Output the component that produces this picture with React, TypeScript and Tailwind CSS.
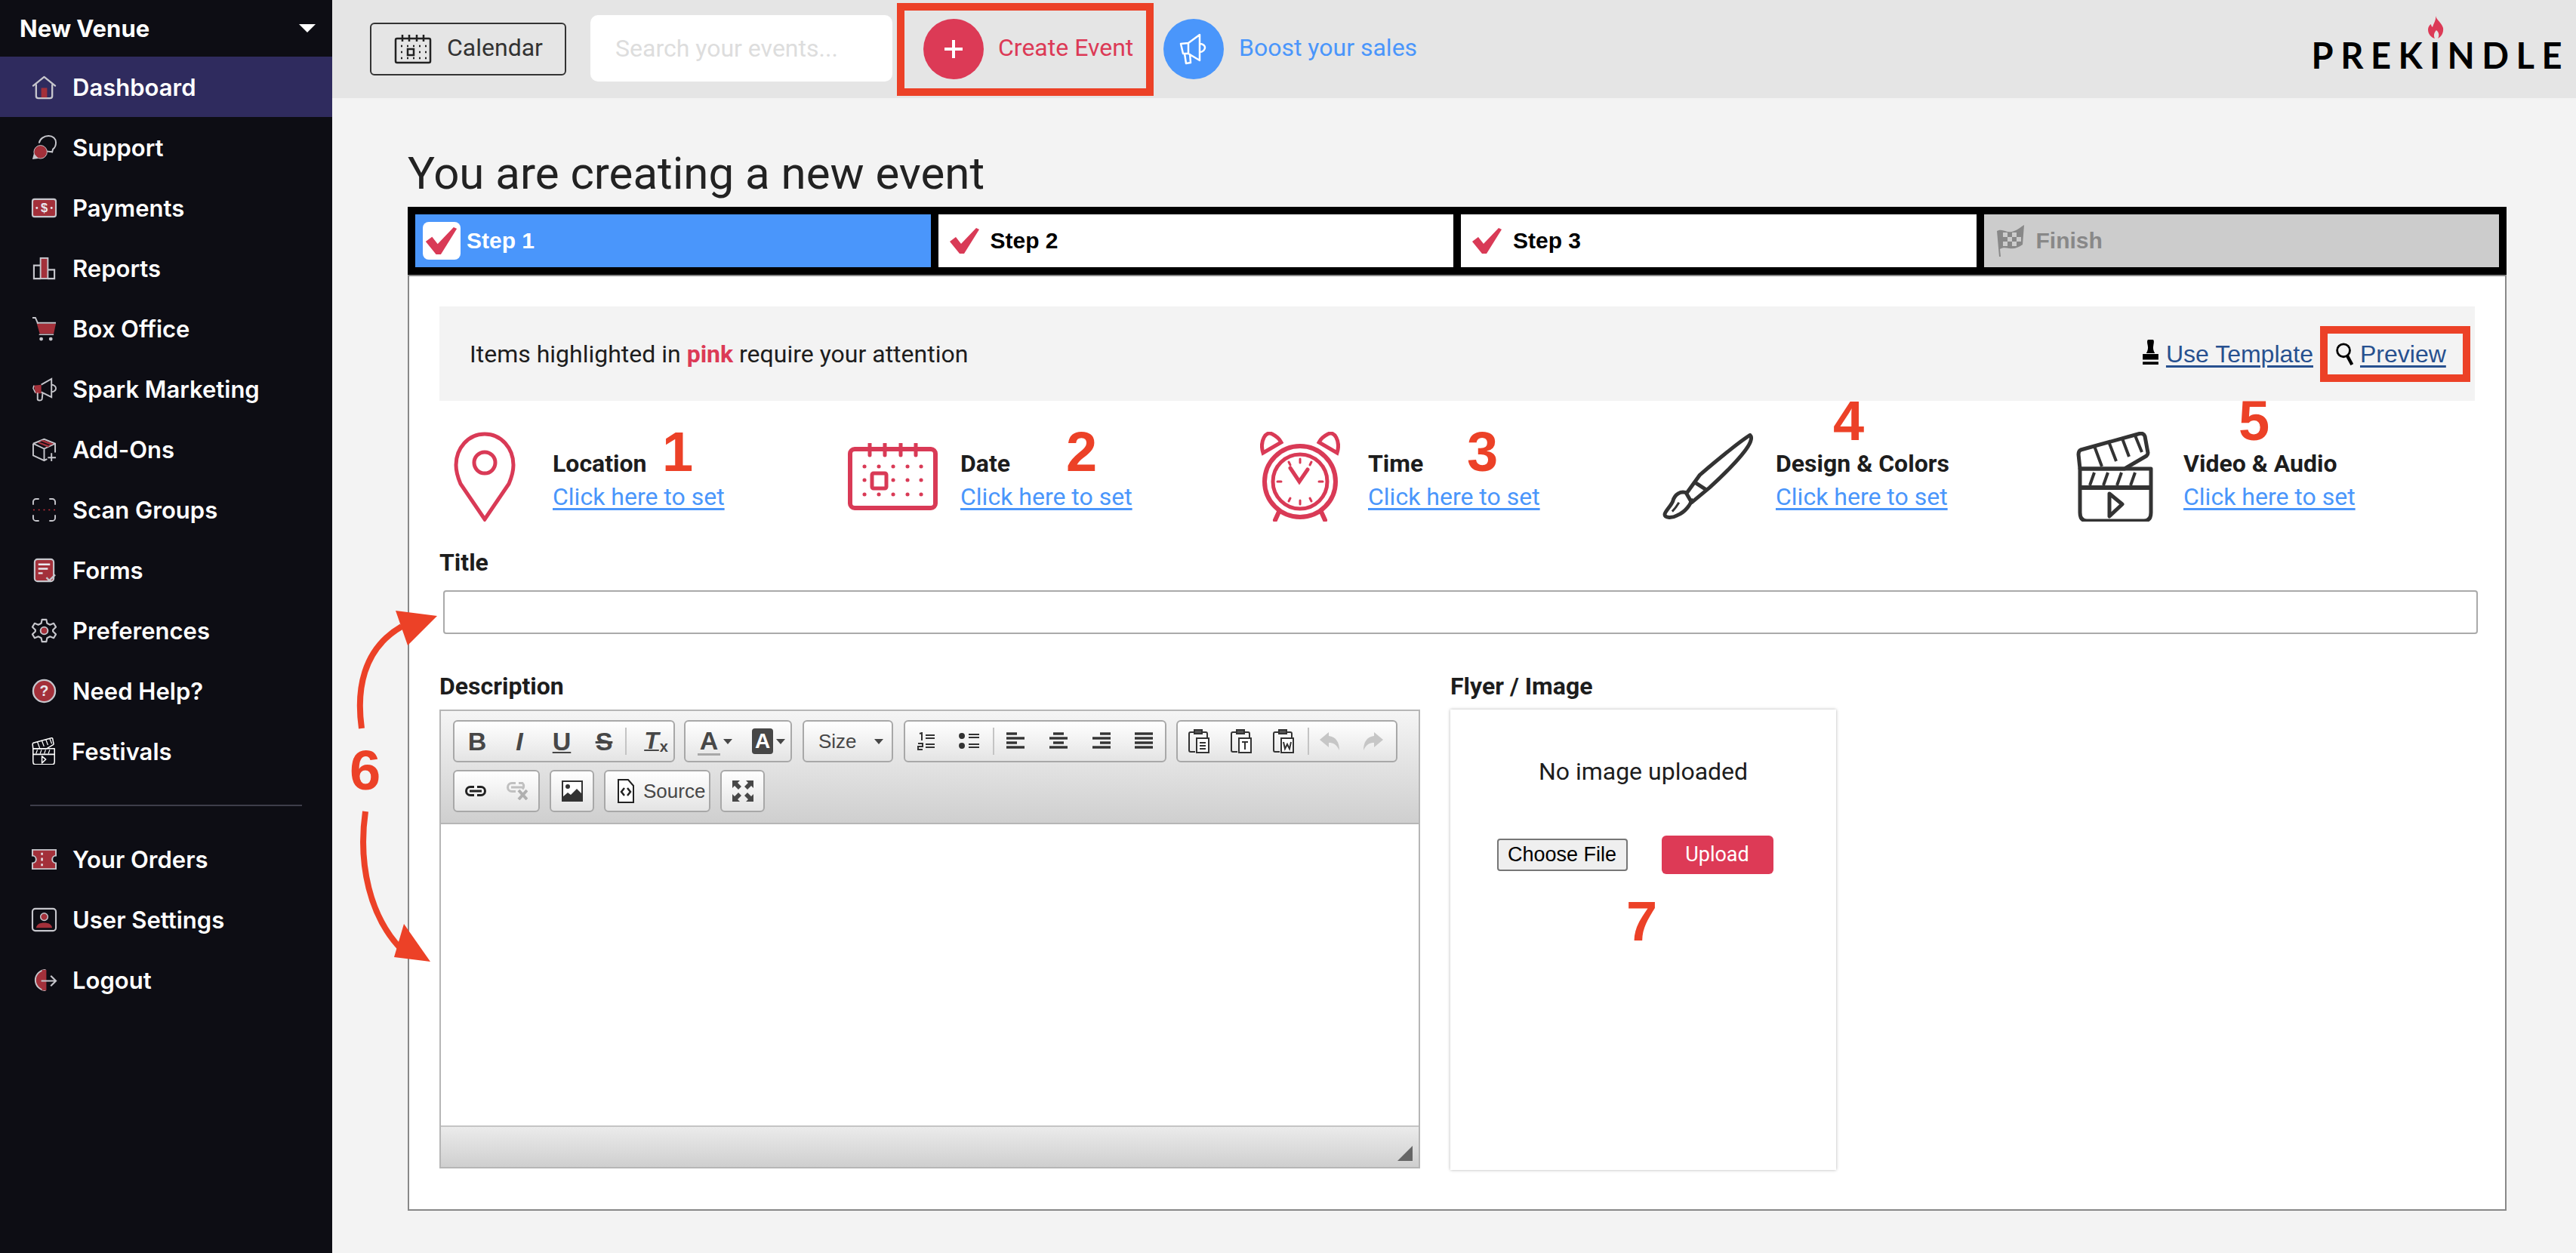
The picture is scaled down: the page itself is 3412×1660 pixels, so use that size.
import React from "react";

const G = "#c6c6cc";
const R = "#a3303a";

const side: Record<string, React.ReactNode> = {
  Dashboard: (<><path d="M2 15 17 3l15 12" fill="none" stroke={G} strokeWidth="2.400" strokeLinecap="round" strokeLinejoin="round"/><path d="M6 13v16a3 3 0 0 0 3 3h16a3 3 0 0 0 3-3V13" fill="none" stroke={G} strokeWidth="2.400"/><rect x="13" y="18" width="8" height="13" fill={R}/></>),
  Support: (<><path d="M10 11C11 5 17 1 23 1c6 0 10 4 10 9 0 4-1 7-4 9l-1 4-8-1" fill="none" stroke={G} strokeWidth="2"/><circle cx="12" cy="23" r="9" fill={R} stroke={G} strokeWidth="1"/><path d="M1 33l2-8 6 7z" fill={G}/></>),
  Payments: (<><rect x="1" y="5" width="32" height="24" rx="3" fill={R} stroke={G} strokeWidth="2.200"/><text x="17" y="23" textAnchor="middle" fontSize="17" fontWeight="700" fill="#e8e8ee" fontFamily="Liberation Sans, sans-serif">$</text><circle cx="7" cy="17" r="1.500" fill="#e8e8ee"/><circle cx="27" cy="17" r="1.500" fill="#e8e8ee"/></>),
  Reports: (<><rect x="12" y="3" width="10" height="28" fill={R} stroke={G} strokeWidth="2"/><path d="M12 13H3v18h9M22 19h9v12h-9" fill="none" stroke={G} strokeWidth="2.200"/></>),
  "Box Office": (<><path d="M1 2h4l4 9" fill="none" stroke={G} strokeWidth="2"/><path d="M7 10h26l-3 14H11z" fill={R}/><path d="M7 9h26" stroke={G} strokeWidth="2"/><path d="M10 25h20" stroke={G} strokeWidth="1.500"/><circle cx="13" cy="31" r="2.500" fill={G}/><circle cx="26" cy="31" r="2.500" fill={G}/></>),
  "Spark Marketing": (<><path d="M3 12l10-1v12H5z" fill={R}/><path d="M13 11 27 3v25l-14-7" fill="none" stroke={G} strokeWidth="2"/><path d="M27 11c4 0 6 3 6 5s-2 5-6 5" fill="none" stroke={G} strokeWidth="2"/><path d="M8 22v9c0 2 5 2 6 0l1-9" fill="none" stroke={G} strokeWidth="2"/><path d="M3 12l-1 4 3 6" fill="none" stroke={G} strokeWidth="1.500"/></>),
  "Add-Ons": (<><path d="M2 9 17 3l15 6v12M2 9v16l15 7 4-2M2 9l15 7 15-7M17 16v16" fill="none" stroke={G} strokeWidth="2"/><path d="M11 5l15 6 4-2-14-5zM8 8l14 6 3-2-14-5z" fill={R}/><path d="M27 22v11M22 28h11" stroke={G} strokeWidth="2"/></>),
  "Scan Groups": (<><path d="M2 10V6a4 4 0 0 1 4-4h4M24 2h4a4 4 0 0 1 4 4v4M2 24v4a4 4 0 0 0 4 4h4M24 32h4a4 4 0 0 0 4-4v-4" fill="none" stroke={G} strokeWidth="2"/><path d="M2 17h30" stroke="#c8303a" strokeWidth="1.500" strokeDasharray="2 5"/></>),
  Forms: (<><rect x="4" y="2" width="26" height="30" rx="4" fill={R} stroke={G} strokeWidth="2.200"/><path d="M9 9h16M9 15h13M9 21h6" stroke="#e8e8ee" strokeWidth="2.500"/><path d="M20 27l4 4 8-8" fill="none" stroke={G} strokeWidth="2.500"/></>),
  Preferences: (<><path d="M14 2h6l1 5 4 2 5-2 3 5-4 4v2l4 4-3 5-5-2-4 2-1 5h-6l-1-5-4-2-5 2-3-5 4-4v-2l-4-4 3-5 5 2 4-2z" fill="none" stroke={G} strokeWidth="2.200" strokeLinejoin="round"/><circle cx="17" cy="17" r="5" fill={R} stroke={G} strokeWidth="2"/></>),
  "Need Help?": (<><circle cx="17" cy="17" r="15" fill={R} stroke={G} strokeWidth="2.400"/><text x="17" y="24" textAnchor="middle" fontSize="20" fontWeight="700" fill="#e8e8ee" fontFamily="Liberation Sans, sans-serif">?</text></>),
  "Your Orders": (<><path d="M1 4h32v8a5 5 0 0 0 0 10v8H1v-8a5 5 0 0 0 0-10z" fill={R} stroke={G} strokeWidth="2"/><path d="M14 8v3M14 15v4M14 23v3" stroke="#e8e8ee" strokeWidth="2.500"/></>),
  "User Settings": (<><rect x="1" y="2" width="32" height="30" rx="4" fill="none" stroke={G} strokeWidth="2.200"/><circle cx="17" cy="13" r="5" fill={R} stroke={G} strokeWidth="1.500"/><path d="M6 28c1-5 5-7 11-7s10 2 11 7z" fill={R}/></>),
  Logout: (<><path d="M19 3a14 14 0 1 0 0 28" fill={R} stroke={G} strokeWidth="2"/><path d="M14 3h6v28h-6z" fill={R}/><path d="M13 18h20M26 11l7 7-7 7" fill="none" stroke={G} strokeWidth="2.200"/></>),
};

function ClapperIcon({ color, className }: { color: string; className: string }) {
  return (
    <svg viewBox="0 0 104 119" className={className} fill="none" stroke={color} strokeWidth="5" strokeLinejoin="round">
      <path d="M5 49 3 30c0-3 1-5 3-6L82 3c5-2 8 0 9 3l4 22c0 2-1 3-2 4L64 49z"/>
      <path d="M24 19l10 27M43 13l10 26M61 9l9 24M78 5l9 22" strokeWidth="4"/>
      <path d="M5 49h94v58c0 7-3 11-9 11H14c-6 0-9-4-9-11z"/>
      <path d="M5 74h94" strokeWidth="6"/>
      <path d="M24 54l-6 17M42 54l-6 17M60 54l-6 17M78 54l-6 17" strokeWidth="4"/>
      <path d="M44 82l17 14-17 16z"/>
    </svg>
  );
}

function SideItem({ label, active }: { label: string; active?: boolean }) {
  return (
    <div className={`h-[80px] flex items-center pl-[42px] ${active ? "bg-[#2f2b5e]" : ""}`}>
      {label === "Festivals" ? (
        <ClapperIcon color="#ffffff" className="w-[32px] h-[36px]" />
      ) : (
        <svg viewBox="0 0 34 34" className="w-[33px] h-[33px] overflow-visible">{side[label]}</svg>
      )}
      <span className="ml-[21px] text-[31px] font-semibold text-white leading-none">{label}</span>
    </div>
  );
}

function Check({ className }: { className: string }) {
  return (
    <svg viewBox="0 0 40 34" className={className}><path d="M0 18 8 12 15 21 35 0 39 2 19 34 13 34z" fill="#d93a56"/></svg>
  );
}

function Step({ label, variant }: { label: string; variant: "active" | "done" | "off" }) {
  const bg = variant === "active" ? "bg-[#4a96fb] text-white" : variant === "done" ? "bg-white text-black" : "bg-[#cccccc] text-[#888888]";
  return (
    <div className={`flex-1 h-[70px] flex items-center ${bg}`}>
      {variant === "active" && (
        <div className="ml-[10px] w-[50px] h-[50px] rounded-lg bg-white flex items-center justify-center"><Check className="w-[44px] h-[36px]" /></div>
      )}
      {variant === "done" && <Check className="ml-[15px] w-[40px] h-[34px]" />}
      {variant === "off" && (
        <svg viewBox="0 0 40 42" className="ml-[15px] w-[40px] h-[42px]" fill="#888888">
          <path d="M2 8c8-4 12 3 20 1s12-7 16-9l-2 26c-6 4-10 6-18 5-5-1-9-1-12 1l1 10H5z" />
          <path d="M10 10h6v6h-6zM22 10h6v6h-6zM16 16h6v6h-6zM28 16h6v6h-6zM10 22h6v6h-6zM22 22h6v6h-6z" fill="#cccccc" />
        </svg>
      )}
      <span className={`font-['Liberation_Sans',sans-serif] font-bold text-[30px] leading-none ${variant === "active" ? "ml-[8px]" : "ml-[14px]"}`}>{label}</span>
    </div>
  );
}

function Item({ label, num, numClass, children }: { label: string; num: string; numClass: string; children: React.ReactNode }) {
  return (
    <div className="relative w-[540px] h-[120px] flex shrink-0">
      <div className="w-[120px] h-[120px] flex items-center justify-center">{children}</div>
      <div className="ml-[30px] pt-[23px]">
        <div className="text-[32px] font-bold leading-[40px] text-[#1d1d1d] whitespace-nowrap">{label}</div>
        <a className="block text-[32px] leading-[44px] mt-[2px] text-[#4a96fb] underline decoration-[3px] underline-offset-[4px]">Click here to set</a>
      </div>
      <span className={`absolute font-['Liberation_Sans',sans-serif] font-bold text-[74px] leading-none text-[#ec4127] ${numClass}`}>{num}</span>
    </div>
  );
}

function Group({ className, children }: { className: string; children: React.ReactNode }) {
  return (
    <div className={`h-[56px] flex items-center rounded-[6px] border-2 border-[#a8a8a8] bg-gradient-to-b from-[#ffffff] to-[#e4e4e4] ${className}`}>{children}</div>
  );
}

function Btn({ w, children }: { w: string; children: React.ReactNode }) {
  return <div className={`h-full flex items-center justify-center text-[#474747] ${w}`}>{children}</div>;
}

const Sep = ({ ml }: { ml: string }) => <div className={`w-[2px] h-[36px] bg-[#c4c4c4] ${ml}`} />;
const Arrow = () => <span className="block w-0 h-0 border-x-[6px] border-x-transparent border-t-[7px] border-t-[#474747]" />;

function Lines({ kind }: { kind: "l" | "c" | "r" | "j" }) {
  const rows = kind === "l" ? ["M0 2h14", "M0 8h24", "M0 14h14", "M0 20h24"] : kind === "c" ? ["M5 2h14", "M0 8h24", "M5 14h14", "M0 20h24"] : kind === "r" ? ["M10 2h14", "M0 8h24", "M10 14h14", "M0 20h24"] : ["M0 2h24", "M0 8h24", "M0 14h24", "M0 20h24"];
  return (
    <svg viewBox="0 0 24 24" className="w-[24px] h-[24px]" stroke="#333" strokeWidth="3.400">
      {rows.map((d) => <path key={d} d={d} />)}
    </svg>
  );
}

function Paste({ inner }: { inner: React.ReactNode }) {
  return (
    <svg viewBox="0 0 28 32" className="w-[28px] h-[32px]" fill="none" stroke="#333" strokeWidth="2">
      <path d="M7 4H3a2 2 0 0 0-2 2v22c0 1 1 2 2 2h6M19 4h4c1 0 2 1 2 2v6" />
      <path d="M8 1h10v5H8z" fill="#555" />
      <rect x="11" y="12" width="16" height="19" fill="#fff" />
      {inner}
    </svg>
  );
}

export default function App() {
  const items = ["Dashboard", "Support", "Payments", "Reports", "Box Office", "Spark Marketing", "Add-Ons", "Scan Groups", "Forms", "Preferences", "Need Help?", "Festivals"];
  return (
    <div className="relative w-[3412px] h-[1660px] flex overflow-hidden bg-[#f3f3f3] font-['Roboto',sans-serif] text-[#1d1d1d]">
      <aside className="w-[440px] shrink-0 bg-[#0d0d14] font-['Inter',sans-serif]">
        <div className="h-[75px] flex items-center justify-between pl-[26px] pr-[22px]">
          <span className="text-[31px] font-bold text-white leading-none">New Venue</span>
          <span className="block w-0 h-0 border-x-[11px] border-x-transparent border-t-[11px] border-t-white" />
        </div>
        {items.map((l, i) => <SideItem key={l} label={l} active={i === 0} />)}
        <div className="h-[2px] ml-[40px] mr-[40px] mt-[31px] mb-[30px] bg-[#3d3d4a]" />
        {["Your Orders", "User Settings", "Logout"].map((l) => <SideItem key={l} label={l} />)}
      </aside>

      <div className="flex-1 min-w-0">
        <header className="h-[130px] bg-[#e5e5e5] flex items-center">
          <button className="ml-[50px] w-[260px] h-[70px] rounded-[6px] border-2 border-[#333333] flex items-center pl-[30px] text-[32px] text-[#333333]">
            <svg viewBox="0 0 50 40" className="w-[50px] h-[40px]" fill="none" stroke="#222" strokeWidth="2.500">
              <rect x="2" y="6" width="46" height="32" rx="2" />
              <path d="M11 1v9M20 1v9M30 1v9M39 1v9" />
              <path d="M9 16h2M17 16h2M25 16h2M33 16h2M41 16h2M9 24h2M33 24h2M41 24h2M9 32h2M17 32h2M25 32h2M33 32h2M41 32h2" />
              <rect x="18" y="20" width="8" height="8" />
            </svg>
            <span className="ml-[20px] -translate-y-[2px]">Calendar</span>
          </button>
          <div className="ml-[32px] w-[400px] h-[88px] rounded-[10px] bg-white flex items-center pl-[33px] text-[32px] text-[#dddddd] -translate-y-[1px]">Search your events...</div>
          <div className="ml-[6px] w-[340px] h-[123px] border-[10px] border-[#ec4127] flex items-center pl-[25px]">
            <div className="w-[80px] h-[80px] rounded-full bg-[#dc3a56] flex items-center justify-center text-white">
              <svg viewBox="0 0 24 24" className="w-[24px] h-[24px]" stroke="#fff" strokeWidth="4"><path d="M12 0v24M0 12h24" /></svg>
            </div>
            <span className="ml-[19px] -translate-y-[2px] text-[32px] text-[#dc3a56] whitespace-nowrap">Create Event</span>
          </div>
          <div className="ml-[13px] w-[80px] h-[80px] rounded-full bg-[#4a96fb] flex items-center justify-center">
            <svg viewBox="0 0 40 44" className="w-[40px] h-[44px]" fill="none" stroke="#fff" strokeWidth="2.500" strokeLinejoin="round">
              <path d="M3 15l10-1v14H6zM13 14 28 3v34l-15-9M28 15c5 0 7 3 7 5s-2 6-7 6M8 28l2 13 6-1-1-12" />
            </svg>
          </div>
          <span className="ml-[20px] -translate-y-[2px] text-[32px] text-[#4a96fb] whitespace-nowrap">Boost your sales</span>
          <div className="relative ml-auto mr-[9px] mt-[18px]">
            <svg viewBox="0 0 21 30" className="absolute left-[154px] -top-[29px] w-[21px] h-[30px]">
              <path d="M10 0c1 5 8 9 10 16 1 7-3 12-7 14 2-3 2-8-2-11-3 3-4 7-2 11-4-1-9-5-9-12 0-3 2-6 4-7 0 2 1 3 2 4 1-5 5-9 4-15z" fill="#dc3a56" />
            </svg>
            <span className="font-['Lato',sans-serif] font-bold text-[47px] leading-none tracking-[9.500px] text-black">PREKINDLE</span>
          </div>
        </header>

        <main className="pl-[100px] w-[2880px]">
          <h1 className="mt-[64px] text-[60px] leading-[72px] font-normal text-[#222222]">You are creating a new event</h1>
          <div className="mt-[8px] bg-black p-[10px] flex gap-[10px] h-[90px]">
            <Step label="Step 1" variant="active" />
            <Step label="Step 2" variant="done" />
            <Step label="Step 3" variant="done" />
            <Step label="Finish" variant="off" />
          </div>
          <section className="bg-white border-2 border-[#888888] h-[1240px] pl-[40px] pt-[40px]">
            <div className="w-[2696px] h-[125px] bg-[#f3f3f3] flex items-center pl-[40px] pr-[6px] text-[32px]">
              <p>Items highlighted in <b className="font-bold text-[#dc3a56]">pink</b> require your attention</p>
              <svg viewBox="0 0 24 36" className="ml-auto w-[23px] h-[34px] -translate-y-[2px]" fill="#000"><path d="M9 0h6c2 0 2 3 1 8-1 4 0 8 2 11H6c2-3 3-7 2-11-1-5-1-8 1-8zM1 20h22v8H1zM1 31h22v4H1z"/></svg>
              <a className="ml-[9px] text-[#27508f] underline decoration-[3px] underline-offset-[4px] font-['Liberation_Sans',sans-serif] text-[32px]">Use Template</a>
              <div className="ml-[9px] w-[199px] h-[74px] border-[10px] border-[#ec4127] flex items-center pl-[10px]">
                <svg viewBox="0 0 24 32" className="w-[24px] h-[30px]" fill="none" stroke="#000" strokeWidth="3"><circle cx="11" cy="11" r="9"/><path d="M16 18l7 13" strokeWidth="4.500"/></svg>
                <a className="pl-[9px] text-[#27508f] underline decoration-[3px] underline-offset-[4px] font-['Liberation_Sans',sans-serif] text-[32px]">Preview</a>
              </div>
            </div>

            <div className="flex mt-[40px]">
              <Item label="Location" num="1" numClass="left-[295px] -top-[9px]">
                <svg viewBox="0 0 82 119" className="w-[82px] h-[119px]" fill="none" stroke="#d93a56" strokeWidth="5">
                  <path d="M41 3C19 3 3 22 3 44c0 10 3 18 6 25l32 47 32-47c3-7 6-15 6-25C79 22 63 3 41 3z"/>
                  <circle cx="41" cy="41" r="14"/>
                </svg>
              </Item>
              <Item label="Date" num="2" numClass="left-[290px] -top-[9px]">
                <svg viewBox="0 0 119 89" className="w-[119px] h-[89px]" fill="none" stroke="#d93a56">
                  <rect x="3" y="8" width="113" height="78" rx="6" strokeWidth="6"/>
                  <path d="M29 1v15M49 1v15M70 1v15M90 1v15" strokeWidth="5" strokeLinecap="round"/>
                  <path d="M22 31h.1M41 31h.1M60 31h.1M79 31h.1M97 31h.1M22 49h.1M60 49h.1M79 49h.1M97 49h.1M22 68h.1M41 68h.1M60 68h.1M79 68h.1M97 68h.1" strokeWidth="5" strokeLinecap="round"/>
                  <rect x="32" y="40" width="19" height="20" rx="2" strokeWidth="5"/>
                </svg>
              </Item>
              <Item label="Time" num="3" numClass="left-[281px] -top-[9px]">
                <svg viewBox="0 0 106 119" className="w-[106px] h-[119px]" fill="none" stroke="#d93a56" strokeWidth="6" strokeLinecap="round">
                  <circle cx="53" cy="66" r="47"/>
                  <circle cx="53" cy="66" r="36" strokeWidth="5"/>
                  <path d="M53 36v5M53 91v5M23 66h5M78 66h5M38 40l2 4M68 40l-2 4M38 92l2-4M68 92l-2-4" strokeWidth="3"/>
                  <path d="M40 48l12 18 11-16" strokeWidth="5"/>
                  <path d="M4 28C-1 12 8-2 16 3c6 3 10 7 12 11z" strokeWidth="5"/>
                  <path d="M102 28c5-16-4-30-12-25-6 3-10 7-12 11z" strokeWidth="5"/>
                  <path d="M25 106l-5 11M81 106l5 11"/>
                </svg>
              </Item>
              <Item label="Design & Colors" num="4" numClass="left-[226px] -top-[50px]">
                <svg viewBox="0 0 121 114" className="w-[121px] h-[114px]" fill="none" stroke="#333333" strokeWidth="5" strokeLinejoin="round">
                  <path d="M117 2C101 12 70 38 50 55L32 80l7 12 24-20c22-20 52-50 55-63 1-3 0-6-1-7z"/>
                  <path d="M43 65l17 11"/>
                  <path d="M34 80c-10-5-18 2-20 10-2 6-11 14-11 18 0 5 10 5 17 1 10-4 20-16 18-22"/>
                  <path d="M13 104c3-3 6-7 9-12" strokeWidth="3"/>
                </svg>
              </Item>
              <Item label="Video & Audio" num="5" numClass="left-[223px] -top-[50px]">
                <ClapperIcon color="#333333" className="w-[104px] h-[119px]" />
              </Item>
            </div>

            <div className="mt-[32px] text-[32px] font-bold leading-[44px]">Title</div>
            <div className="mt-[15px] ml-[5px] w-[2695px] h-[58px] rounded-[4px] border-2 border-[#aaaaaa] bg-white" />

            <div className="flex mt-[47px]">
              <div className="w-[1299px] mr-[40px]">
                <div className="text-[32px] font-bold leading-[44px]">Description</div>
                <div className="mt-[9px] h-[608px] border-2 border-[#b6b6b6] flex flex-col">
                  <div className="h-[150px] bg-gradient-to-b from-[#f5f5f5] to-[#cfcfcf] border-b-2 border-[#b6b6b6] px-[16px] pt-[12px] font-['Liberation_Sans',sans-serif]">
                    <div className="flex">
                      <Group className="w-[294px] pl-[2px]">
                        <Btn w="w-[56px]"><b className="text-[34px] leading-none">B</b></Btn>
                        <Btn w="w-[56px]"><b className="text-[34px] leading-none italic">I</b></Btn>
                        <Btn w="w-[56px]"><b className="text-[34px] leading-none underline decoration-2 underline-offset-2">U</b></Btn>
                        <Btn w="w-[56px]"><b className="text-[34px] leading-none line-through">S</b></Btn>
                        <Sep ml="ml-0" />
                        <Btn w="w-[58px] ml-[4px]">
                          <span className="relative">
                            <b className="text-[32px] leading-none italic underline decoration-2">T</b>
                            <b className="absolute -right-[12px] bottom-0 text-[20px] leading-none">x</b>
                          </span>
                        </Btn>
                      </Group>
                      <Group className="ml-[12px] w-[143px] pl-[16px]">
                        <b className="w-[30px] text-[34px] leading-none text-center text-[#474747] border-b-[3px] border-[#a8a8a8]">A</b>
                        <span className="ml-[4px]"><Arrow /></span>
                        <b className="ml-[26px] w-[28px] h-[34px] rounded-[4px] bg-[#474747] text-white text-[28px] leading-[34px] text-center">A</b>
                        <span className="ml-[4px]"><Arrow /></span>
                      </Group>
                      <Group className="ml-[14px] w-[120px] pl-[19px] text-[26px] text-[#474747]">
                        <span className="w-[74px]">Size</span><Arrow />
                      </Group>
                      <Group className="ml-[14px] w-[348px]">
                        <Btn w="w-[56px]">
                          <svg viewBox="0 0 24 24" className="w-[24px] h-[24px]" stroke="#333" strokeWidth="2" fill="none"><path d="M3 2l3-1v10M11 4h12M11 8h12M1 15h6v4H1v4h6M11 16h12M11 20h12"/></svg>
                        </Btn>
                        <Btn w="w-[56px]">
                          <svg viewBox="0 0 28 24" className="w-[28px] h-[24px]" stroke="#333" strokeWidth="2" fill="#333"><circle cx="5" cy="5" r="3"/><circle cx="5" cy="18" r="3"/><path d="M14 3h14M14 7h14M14 16h14M14 20h14"/></svg>
                        </Btn>
                        <Sep ml="ml-[4px]" />
                        <Btn w="w-[57px]"><Lines kind="l" /></Btn>
                        <Btn w="w-[57px]"><Lines kind="c" /></Btn>
                        <Btn w="w-[57px]"><Lines kind="r" /></Btn>
                        <Btn w="w-[56px]"><Lines kind="j" /></Btn>
                      </Group>
                      <Group className="ml-[13px] w-[293px] pl-[0px]">
                        <Btn w="w-[56px]"><Paste inner={<path d="M15 18h8M15 22h8M15 26h8" />} /></Btn>
                        <Btn w="w-[56px]"><Paste inner={<path d="M15 17h8M19 17v10" />} /></Btn>
                        <Btn w="w-[56px]"><Paste inner={<path d="M14 17l2 9 3-6 3 6 2-9" />} /></Btn>
                        <Sep ml="ml-[4px]" />
                        <Btn w="w-[56px]">
                          <svg viewBox="0 0 28 24" className="w-[28px] h-[24px]" fill="#c6c6c6"><path d="M12 0 0 10l12 10v-6c6 0 10 2 14 10 0-10-4-18-14-19z"/></svg>
                        </Btn>
                        <Btn w="w-[56px]">
                          <svg viewBox="0 0 28 24" className="w-[28px] h-[24px]" fill="#c6c6c6"><path d="M16 0l12 10-12 10v-6C10 14 6 16 2 24 2 14 6 6 16 5z"/></svg>
                        </Btn>
                      </Group>
                    </div>
                    <div className="flex mt-[10px]">
                      <Group className="w-[115px]">
                        <Btn w="w-[56px]"><svg viewBox="0 0 28 14" className="w-[28px] h-[14px]" fill="none" stroke="#222" strokeWidth="3"><path d="M12 1.500H7a5.500 5.500 0 0 0 0 11h5M16 1.500h5a5.500 5.500 0 0 1 0 11h-5M6 7h16"/></svg></Btn>
                        <Btn w="w-[56px]"><svg viewBox="0 0 28 24" className="w-[28px] h-[24px]" fill="none" stroke="#c0c0c0" strokeWidth="3"><path d="M12 1.500H7a5.500 5.500 0 0 0 0 11h5M16 1.500h5a5.500 5.500 0 0 1 0 8M6 7h16"/><path d="M16 11l11 12M27 11 16 23" stroke="#b0b0b0" strokeWidth="4"/></svg></Btn>
                      </Group>
                      <Group className="ml-[13px] w-[59px] justify-center">
                        <svg viewBox="0 0 28 28" className="w-[28px] h-[28px]"><rect x="1" y="1" width="26" height="26" fill="#fff" stroke="#333" strokeWidth="2"/><path d="M1 27V22l7-6 4 3 8-8 7 7v9z" fill="#333"/><circle cx="8" cy="8" r="3" fill="#333"/></svg>
                      </Group>
                      <Group className="ml-[13px] w-[141px] pl-[16px] text-[26px] text-[#474747]">
                        <svg viewBox="0 0 22 32" className="w-[22px] h-[32px]" fill="#fff" stroke="#222" strokeWidth="2"><path d="M1 1h13l7 8v22H1z"/><path d="M9 12l-4 5 4 5M13 12l4 5-4 5" strokeWidth="2.500" fill="none"/></svg>
                        <span className="ml-[12px]">Source</span>
                      </Group>
                      <Group className="ml-[13px] w-[59px] justify-center">
                        <svg viewBox="0 0 28 28" className="w-[28px] h-[28px]" fill="#474747"><path d="M0 0h10L7 3l5 5-4 4-5-5-3 3zM28 0v10l-3-3-5 5-4-4 5-5-3-3zM0 28V18l3 3 5-5 4 4-5 5 3 3zM28 28H18l3-3-5-5 4-4 5 5 3-3z"/></svg>
                      </Group>
                    </div>
                  </div>
                  <div className="flex-1 bg-white" />
                  <div className="relative h-[55px] border-t-2 border-[#c4c4c4] bg-gradient-to-b from-[#ebebeb] to-[#cfcfcf]">
                    <span className="absolute right-[8px] bottom-[8px] w-0 h-0 border-b-[20px] border-b-[#666666] border-l-[20px] border-l-transparent" />
                  </div>
                </div>
              </div>

              <div className="w-[511px]">
                <div className="text-[32px] font-bold leading-[44px]">Flyer / Image</div>
                <div className="mt-[9px] h-[610px] bg-white shadow-[0_0_4px_rgba(0,0,0,0.3)] flex flex-col items-center">
                  <p className="mt-[60px] text-[32px] leading-[44px]">No image uploaded</p>
                  <div className="mt-[63px] mr-[22px] flex items-center">
                    <button className="w-[173px] h-[43px] bg-[#efefef] border-2 border-[#767676] rounded-[4px] text-[27px] leading-none text-black font-['Liberation_Sans',sans-serif]">Choose File</button>
                    <button className="ml-[45px] w-[148px] h-[51px] bg-[#dd3a56] rounded-[6px] text-[27px] leading-none text-white">Upload</button>
                  </div>
                  <span className="relative top-[26px] left-[-2px] font-['Liberation_Sans',sans-serif] font-bold text-[74px] leading-none text-[#ec4127]">7</span>
                </div>
              </div>
            </div>
          </section>
        </main>
      </div>

      <svg viewBox="0 0 130 480" className="absolute left-[460px] top-[800px] w-[130px] h-[480px] pointer-events-none" fill="none" stroke="#ec4127" strokeWidth="8">
        <path d="M19 165C12 115 20 60 72 30" />
        <path d="M119 16 64 9 80 55z" fill="#ec4127" stroke="none" />
        <path d="M24 275C14 345 30 415 72 458" />
        <path d="M110 474 75 424 62 468z" fill="#ec4127" stroke="none" />
      </svg>
      <span className="absolute left-[463px] top-[984px] font-['Liberation_Sans',sans-serif] font-bold text-[74px] leading-none text-[#ec4127]">6</span>
    </div>
  );
}
